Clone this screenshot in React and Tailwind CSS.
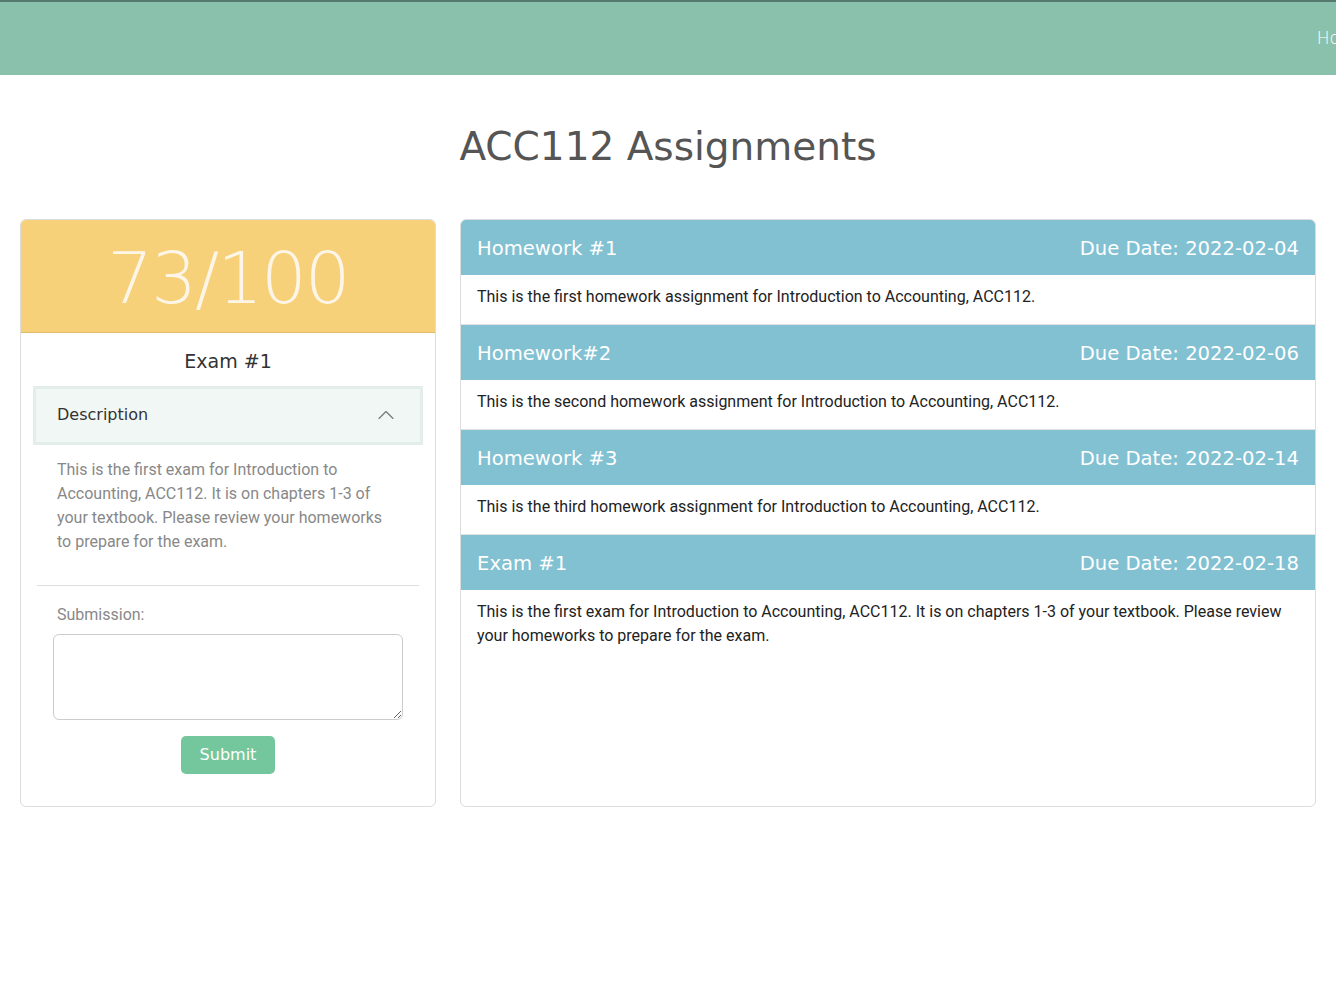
import { ChevronUp } from 'lucide-react';

const heading = { fontFamily: '"DejaVu Sans", "Open Sans", sans-serif' };

const assignments = [
    {
        id: 1,
        title: 'Homework #1',
        due: '2022-02-04',
        body: 'This is the first homework assignment for Introduction to Accounting, ACC112.',
    },
    {
        id: 2,
        title: 'Homework#2',
        due: '2022-02-06',
        body: 'This is the second homework assignment for Introduction to Accounting, ACC112.',
    },
    {
        id: 3,
        title: 'Homework #3',
        due: '2022-02-14',
        body: 'This is the third homework assignment for Introduction to Accounting, ACC112.',
    },
    {
        id: 4,
        title: 'Exam #1',
        due: '2022-02-18',
        body: 'This is the first exam for Introduction to Accounting, ACC112. It is on chapters 1-3 of your textbook. Please review your homeworks to prepare for the exam.',
    },
];

const App = () => {
    return (
        <div className="min-h-screen bg-white" style={{ fontFamily: 'Roboto, "Liberation Sans", sans-serif' }}>
            {/* Navbar */}
            <nav className="h-[75px] bg-[#8ac1ad] border-t-2 border-[#567a6f] flex items-center justify-end overflow-hidden">
                <span className="text-white text-[17px] font-light whitespace-nowrap translate-x-[31px]" style={heading}>
                    Home
                </span>
            </nav>

            {/* Title */}
            <h1 className="text-center text-[39px] text-[#555] pt-[45px] leading-[54px]" style={heading}>
                ACC112 Assignments
            </h1>

            <div className="flex gap-[24px] px-[20px] pt-[45px]">
                {/* Grade card */}
                <div className="w-[416px] h-[588px] border border-[#dcdcdc] rounded-md overflow-hidden flex flex-col">
                    <div className="h-[113px] bg-[#f6d17a] border-b border-[#e0bb6a] flex items-center justify-center">
                        <span className="text-[72px] font-extralight text-[#fdf6e8] leading-none tracking-[-2px] pt-[4px]" style={heading}>
                            73/100
                        </span>
                    </div>
                    <div className="text-center text-[19px] text-[#333] pt-[14px] pb-[10px]" style={heading}>
                        Exam #1
                    </div>
                    <div className="mx-[12px] h-[59px] bg-[#f1f7f5] border-[3px] border-[#e3eeeb] flex items-center justify-between pl-[21px] pr-[20px]">
                        <span className="text-[16px] text-[#333]" style={heading}>Description</span>
                        <ChevronUp size={28} strokeWidth={1} className="text-[#777]" />
                    </div>
                    <p className="px-[36px] pt-[13px] text-[16px] leading-[24px] text-[#888]">
                        This is the first exam for Introduction to Accounting, ACC112. It is on chapters 1-3 of your textbook. Please review your homeworks to prepare for the exam.
                    </p>
                    <hr className="mx-[16px] mt-[31px] border-[#dedede]" />
                    <label className="px-[36px] pt-[17px] text-[16px] text-[#888]">Submission:</label>
                    <textarea className="mx-[32px] mt-[7px] h-[86px] border border-[#ccc] rounded-md resize-y" />
                    <div className="flex justify-center pt-[16px]">
                        <button className="w-[94px] h-[38px] bg-[#74c79d] text-white text-[16px] rounded-[5px]" style={heading}>
                            Submit
                        </button>
                    </div>
                </div>

                {/* Assignment list */}
                <div className="flex-1 h-[588px] border border-[#dcdcdc] rounded-md overflow-hidden">
                    {assignments.map((a) => (
                        <div key={a.id} className="border-b border-[#e2e2e2] last:border-b-0">
                            <div className="h-[55px] bg-[#82c1d2] flex items-center justify-between px-[16px] pt-[2px] text-white text-[19.6px]" style={heading}>
                                <span>{a.title}</span>
                                <span>Due Date: {a.due}</span>
                            </div>
                            <p className="px-[16px] pt-[10px] pb-[15px] text-[16px] leading-[24px] text-[#222]">{a.body}</p>
                        </div>
                    ))}
                </div>
            </div>
        </div>
    );
};

export default App;
